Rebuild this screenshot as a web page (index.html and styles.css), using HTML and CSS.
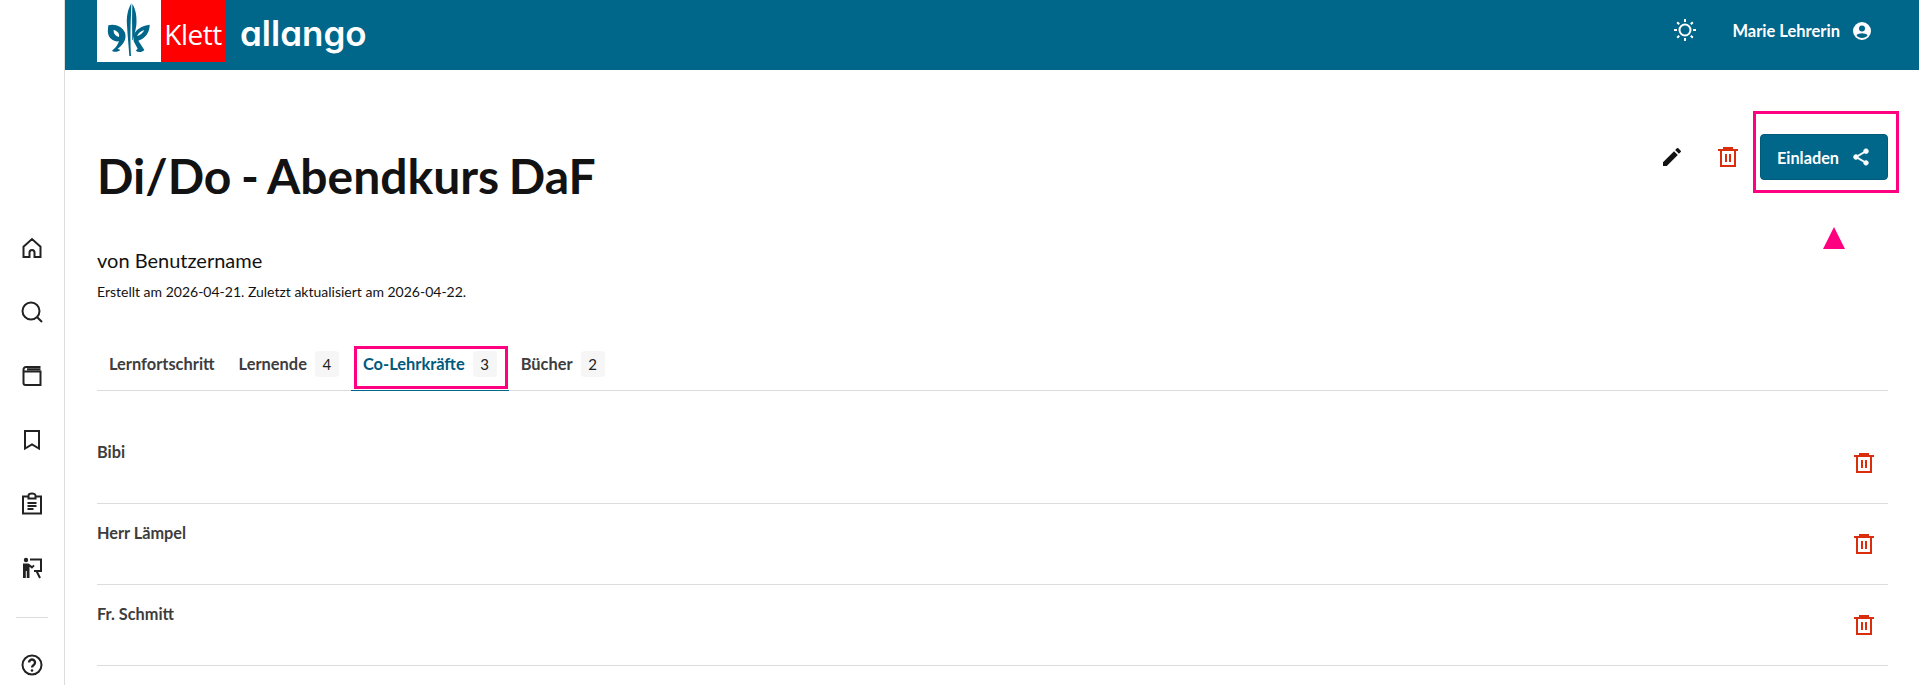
FILE: index.html
```html
<!DOCTYPE html>
<html lang="de">
<head>
    <meta charset="UTF-8">
    <meta name="viewport" content="width=device-width, initial-scale=1.0">
    <title>Di/Do - Abendkurs DaF</title>
    <link rel="stylesheet" href="styles.css">
</head>
<body>
    <svg class="icon-defs" width="0" height="0">
        <symbol id="trash" viewBox="0 0 20 20">
            <path d="M5 0h10v2h5v2H0V2h5zM2 4h2v14h12V4h2v16H2zM7 7h2v8H7zM11 7h2v8h-2z"/>
        </symbol>
    </svg>

    <aside class="sidebar">
        <a class="side-item"><svg class="side-icon" viewBox="0 0 24 24"><path d="M3.500 21V10.800L12 3l8.500 7.800V21H14.500v-4.500a2.500 2.500 0 0 0-5 0V21z"/></svg></a>
        <a class="side-item"><svg class="side-icon" viewBox="0 0 24 24"><circle cx="11" cy="11" r="8.500"/><path d="M17.200 17.200 22 22"/></svg></a>
        <a class="side-item"><svg class="side-icon" viewBox="0 0 24 24"><path d="M20.500 3H6a2.500 2.500 0 0 0-2.500 2.500V19A2 2 0 0 0 5.500 21h15V7.500H3.500M7 5.300h13.500"/></svg></a>
        <a class="side-item"><svg class="side-icon" viewBox="0 0 24 24"><path d="M5 3h14v17.500l-7-4-7 4z"/></svg></a>
        <a class="side-item"><svg class="side-icon" viewBox="0 0 24 24"><path d="M8.500 4.500H3v17h18v-17h-5.500M8.500 3.500a3.500 2 0 0 1 7 0v3h-7zM7.500 11h9M7.500 14h9M7.500 17h6"/></svg></a>
        <a class="side-item"><svg class="side-icon" viewBox="0 0 24 24"><circle class="solid" cx="6" cy="4" r="2.200"/><path class="solid" d="M3 7.500h5.500l3.500 2.600 1.500-1.300 1.200 1.300-2.700 2.700L9.500 10.800V22H6.800v-7H5.800v7H3z"/><path d="M10 3.500h11v11.500h-7M16.500 15l3.500 7"/></svg></a>
        <div class="side-sep"></div>
        <a class="side-item side-help"><svg class="side-icon" viewBox="0 0 24 24"><circle cx="12" cy="12" r="9.500"/><path class="bold" d="M9 9.500a3 3 0 1 1 4.700 2.500c-1.100.8-1.700 1.300-1.700 2.500"/><circle class="solid" cx="12" cy="17.500" r="1.300"/></svg></a>
    </aside>

    <div class="main">
        <header class="topbar">
            <div class="logo">
                <div class="logo-white">
                    <svg class="logo-leaf" viewBox="0 0 192 186">
                        <path d="M103 10C92 30 88 50 90 75c2 35 5 65 7 93h5c-2-38-2-88 0-123z"/>
                        <path d="M106 12c10 16 14 38 12 63-2 15-6 30-10 45h-2c-1-40-1-80 0-108z"/>
                        <path fill-rule="evenodd" d="M34 76c18-6 42 2 50 22 6 20-6 36-22 48l8 4c-6 6-18 8-25 2 9-6 17-16 21-28-16 2-30-8-33-24-1-8 0-16 1-24zM50 90c-1 10 5 18 16 21 3-10-5-19-16-21z"/>
                        <path fill-rule="evenodd" d="M158 74c0 18-8 34-24 44l-10 4 18 28c-8 8-18 8-26 2l6-6-12-22v-16c2-18 26-32 48-34zM142 90c-10 3-18 9-22 18 10-2 18-9 22-18z"/>
                    </svg>
                </div>
                <div class="logo-red">Klett</div>
            </div>
            <div class="brand">allango</div>
            <div class="topbar-right">
                <svg class="sun" viewBox="0 0 24 24">
                    <circle cx="12" cy="12" r="5.500"/>
                    <path d="M12 1v3M12 20v3M1 12h3M20 12h3M4.200 4.200l2 2M17.800 17.800l2 2M4.200 19.800l2-2M17.800 6.200l2-2"/>
                </svg>
                <span class="user-name">Marie Lehrerin</span>
                <svg class="account" viewBox="0 0 20 20">
                    <path fill-rule="evenodd" d="M10 1a9 9 0 1 0 0 18 9 9 0 0 0 0-18zm0 3.500a3 3 0 1 1 0 6 3 3 0 0 1 0-6zm0 12.500c-2.400 0-4.500-1.100-5.500-2.800C5.500 13 8 12.300 10 12.300s4.500.7 5.500 1.900c-1 1.700-3.100 2.800-5.500 2.800z"/>
                </svg>
            </div>
        </header>

        <main class="content">
            <div class="title-row">
                <h1>Di/Do - Abendkurs DaF</h1>
                <div class="actions">
                    <svg class="pencil" viewBox="0 0 24 24">
                        <path d="M3 17.250V21h3.750L17.810 9.940l-3.750-3.750zM20.710 7.040a1 1 0 0 0 0-1.410l-2.340-2.340a1 1 0 0 0-1.410 0l-1.830 1.830 3.750 3.750z"/>
                    </svg>
                    <svg class="trash"><use href="#trash"/></svg>
                    <button class="invite">
                        Einladen
                        <svg class="share" viewBox="0 0 24 24">
                            <path d="M18 16.080c-.76 0-1.440.3-1.960.77L8.910 12.700c.05-.23.090-.46.090-.7s-.04-.47-.09-.7l7.050-4.110c.54.5 1.250.81 2.040.81 1.660 0 3-1.340 3-3s-1.340-3-3-3-3 1.340-3 3c0 .24.040.47.090.7L8.040 9.810C7.500 9.310 6.790 9 6 9c-1.660 0-3 1.340-3 3s1.340 3 3 3c.79 0 1.500-.31 2.040-.81l7.120 4.160c-.05.210-.08.430-.08.650 0 1.610 1.310 2.920 2.920 2.920s2.920-1.310 2.920-2.920-1.310-2.920-2.920-2.920z"/>
                        </svg>
                    </button>
                </div>
            </div>

            <p class="byline">von Benutzername</p>
            <p class="dates">Erstellt am 2026-04-21. Zuletzt aktualisiert am 2026-04-22.</p>

            <nav class="tabs">
                <a class="tab">Lernfortschritt</a>
                <a class="tab">Lernende <span class="count">4</span></a>
                <a class="tab active">Co-Lehrkräfte <span class="count">3</span></a>
                <a class="tab">Bücher <span class="count">2</span></a>
            </nav>

            <ul class="people">
                <li class="person"><span class="person-name">Bibi</span><svg class="trash"><use href="#trash"/></svg></li>
                <li class="person"><span class="person-name">Herr Lämpel</span><svg class="trash"><use href="#trash"/></svg></li>
                <li class="person"><span class="person-name">Fr. Schmitt</span><svg class="trash"><use href="#trash"/></svg></li>
            </ul>
        </main>
    </div>

    <!-- tutorial highlights drawn over the page -->
    <div class="mark mark-invite"></div>
    <div class="mark mark-tab"></div>
    <div class="mark-arrow"></div>
</body>
</html>
```

FILE: styles.css
```css
* {
    margin: 0;
    padding: 0;
    box-sizing: border-box;
}

html, body {
    height: 100%;
    overflow: hidden;
}

body {
    display: flex;
    background: #fff;
    color: #121212;
    font-family: 'Lato', sans-serif;
    position: relative;
}

.icon-defs {
    position: absolute;
}

/* Sidebar */
.sidebar {
    width: 65px;
    flex: none;
    border-right: 1px solid #dcdcdc;
    padding-top: 216px;
    display: flex;
    flex-direction: column;
    align-items: center;
}

.side-item {
    width: 64px;
    height: 64px;
    flex: none;
    display: flex;
    align-items: center;
    justify-content: center;
}

.side-icon {
    width: 24px;
    height: 24px;
    fill: none;
    stroke: #222;
    stroke-width: 2;
}

.side-icon .solid {
    fill: #222;
    stroke: none;
}

.side-icon .bold {
    stroke-width: 2.4;
}

.side-sep {
    width: 32px;
    height: 1px;
    flex: none;
    margin-top: 17px;
    background: #dcdcdc;
}

.side-help {
    margin-top: 15px;
}

/* Top bar */
.main {
    flex: 1;
    min-width: 0;
}

.topbar {
    height: 70px;
    background: #00668a;
    color: #fff;
    display: flex;
    padding-left: 32px;
    padding-right: 47px;
}

.logo {
    display: flex;
    height: 62px;
    width: 128px;
}

.logo-white {
    width: 64px;
    background: #fff;
}

.logo-leaf {
    display: block;
    width: 64px;
    height: 62px;
    fill: #00668a;
}

.logo-red {
    width: 64px;
    background: #f00;
    color: #fff;
    font-family: 'Open Sans', sans-serif;
    font-size: 28px;
    letter-spacing: -0.5px;
    line-height: 68px;
    text-align: center;
}

.brand {
    margin-left: 15px;
    font-family: 'Inter', sans-serif;
    font-feature-settings: 'cv11';
    font-size: 35px;
    font-weight: 600;
    line-height: 66px;
}

.topbar-right {
    margin-left: auto;
    height: 62px;
    display: flex;
    align-items: center;
}

.sun {
    width: 24px;
    height: 24px;
    margin-bottom: 2px;
    fill: none;
    stroke: #fff;
    stroke-width: 2;
}

.user-name {
    margin-left: 35px;
    font-size: 16.500px;
    font-weight: 700;
}

.account {
    width: 20px;
    height: 20px;
    margin-left: 12px;
    fill: #fff;
}

/* Page content */
.content {
    padding: 64px 31px 0 32px;
}

.title-row {
    display: flex;
    align-items: flex-start;
    justify-content: space-between;
}

h1 {
    font-size: 48px;
    font-weight: 700;
    line-height: 58px;
    word-spacing: -2px;
    margin-top: 13px;
}

.actions {
    display: flex;
    align-items: center;
}

.pencil {
    width: 24px;
    height: 24px;
    fill: #121212;
}

.trash {
    width: 20px;
    height: 20px;
    fill: #d92d0c;
}

.actions .trash {
    margin-left: 34px;
}

.invite {
    margin-left: 22px;
    width: 128px;
    height: 46px;
    display: flex;
    align-items: center;
    justify-content: center;
    gap: 12px;
    background: #00668a;
    color: #fff;
    border: 1px solid #005a7a;
    border-radius: 4px;
    font-family: inherit;
    font-size: 16.300px;
    font-weight: 700;
}

.share {
    width: 20px;
    height: 20px;
    fill: #fff;
    stroke: #fff;
    stroke-width: 0.6;
}

.byline {
    margin-top: 42px;
    font-size: 20px;
    line-height: 26px;
}

.dates {
    margin-top: 9px;
    font-size: 14px;
    line-height: 20px;
}

/* Tabs */
.tabs {
    margin-top: 42px;
    display: flex;
    border-bottom: 1px solid #dcdcdc;
}

.tab {
    height: 47px;
    padding: 0 12px 7px;
    display: flex;
    align-items: center;
    gap: 8px;
    font-size: 16.420px;
    font-weight: 700;
    color: #3d3d3d;
    margin-bottom: -1px;
    border-bottom: 1px solid transparent;
}

.tab.active {
    color: #005a7d;
    border-bottom-color: #00668a;
}

.count {
    width: 24px;
    height: 26px;
    background: #f6f6f6;
    border-radius: 4px;
    color: #222;
    font-size: 15px;
    font-weight: 400;
    line-height: 26px;
    text-align: center;
}

/* Co-teacher rows */
.people {
    list-style: none;
    margin-top: 32px;
}

.person {
    height: 81px;
    display: flex;
    justify-content: space-between;
    align-items: center;
    padding-right: 14px;
    border-bottom: 1px solid #dcdcdc;
}

.person-name {
    align-self: flex-start;
    margin-top: 19px;
    font-size: 16.300px;
    font-weight: 700;
    line-height: 20px;
    color: #3d3d3d;
}

/* Highlights */
.mark {
    position: absolute;
    border: 3px solid #ff0080;
}

.mark-invite {
    left: 1753px;
    top: 111px;
    width: 146px;
    height: 82px;
}

.mark-tab {
    left: 354px;
    top: 346px;
    width: 154px;
    height: 43px;
}

.mark-arrow {
    position: absolute;
    left: 1823px;
    top: 227px;
    width: 22px;
    height: 22px;
    background: #ff0080;
    clip-path: polygon(50% 0, 100% 100%, 0 100%);
}
```
